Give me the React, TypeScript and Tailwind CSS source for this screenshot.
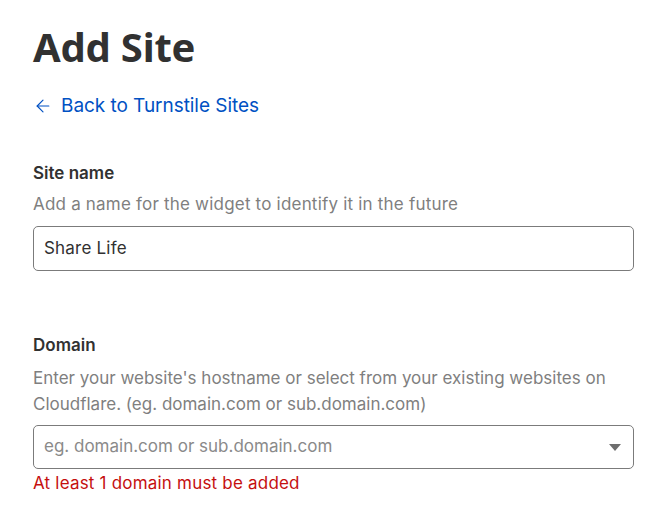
import { ArrowLeft } from 'lucide-react'

const FONT = { fontFamily: 'Inter, "Noto Sans", "Noto Sans CJK KR", sans-serif' }
const TITLE_FONT = { fontFamily: '"Noto Sans", "Noto Sans CJK KR", sans-serif' }

export default function App() {
  return (
    <div className="min-h-[529px] bg-white pl-[33px] pr-[33px] pt-[20px] tracking-[0.2px]" style={FONT}>
      {/* ── Header ── */}
      <h1 className="text-[40px] font-bold leading-[54px] text-[#313131] tracking-[-0.2px]" style={TITLE_FONT}>Add Site</h1>
      <a href="#" className="mt-[20px] inline-flex items-center gap-[8px] text-[19px] leading-[24px] tracking-[-0.05px] text-[#0051c3]">
        <ArrowLeft size={20} strokeWidth={1.4} />
        Back to Turnstile Sites
      </a>

      {/* ── Site name ── */}
      <div className="mt-[40px] flex flex-col">
        <label className="text-[17px] font-semibold leading-[22px] tracking-[0px] text-[#313131]">Site name</label>
        <p className="mt-[9px] text-[17px] leading-[22px] text-[#7f7f7f]">Add a name for the widget to identify it in the future</p>
        <div className="mt-[11px] flex h-[45px] w-[601px] items-center rounded-[5px] border border-[#7b7b7b] px-[10px] text-[17px] text-[#313131]">
          Share Life
        </div>
      </div>

      {/* ── Domain ── */}
      <div className="mt-[63px] flex flex-col">
        <label className="text-[17px] font-semibold leading-[22px] tracking-[0px] text-[#313131]">Domain</label>
        <p className="mt-[9px] text-[17px] leading-[26px] tracking-[0px] text-[#7f7f7f]">
          Enter your website's hostname or select from your existing websites on Cloudflare. (eg. domain.com or sub.domain.com)
        </p>
        <div className="mt-[8px] flex h-[44px] w-[601px] items-center justify-between rounded-[5px] border border-[#7b7b7b] pl-[10px] pr-[12px] text-[17px] tracking-[0px] text-[#8a8a8a]">
          <span>eg. domain.com or sub.domain.com</span>
          <svg width="12" height="7" viewBox="0 0 12 7"><path d="M0 0h12L6 7z" fill="#6e6e6e" /></svg>
        </div>
        <p className="mt-[3px] text-[17px] leading-[22px] text-[#c50f0f]">At least 1 domain must be added</p>
      </div>
    </div>
  )
}
